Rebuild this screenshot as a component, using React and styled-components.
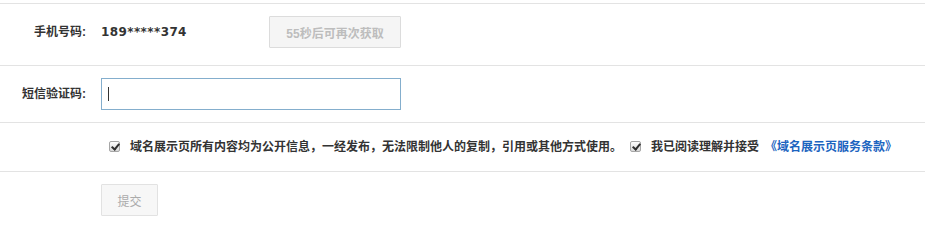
import React from 'react'
import styled, { createGlobalStyle } from 'styled-components'

const GlobalStyle = createGlobalStyle`
    html, body {
        margin: 0;
        padding: 0;
        background: #fff;
    }
    body {
        font-family: "Liberation Sans", "Noto Sans CJK SC", sans-serif;
        font-size: 12px;
        color: #333;
    }
`

export default class App extends React.Component {
    constructor(props) {
        super(props)
        this.state = {
            code: '',
            agreePublic: true,
            agreeTerms: true,
        }
    }

    render() {
        return (
            <Form>
                <GlobalStyle />
                <Row $top={12} $bottom={17}>
                    <Label>手机号码:</Label>
                    <Phone>189*****374</Phone>
                    <Button disabled>55秒后可再次获取</Button>
                </Row>
                <Row $top={12} $bottom={12}>
                    <Label>短信验证码:</Label>
                    <InputWrap>
                        <Input
                            value={this.state.code}
                            onChange={e => this.setState({ code: e.target.value })}
                        />
                        {this.state.code === '' && <Caret />}
                    </InputWrap>
                </Row>
                <Row $top={16} $bottom={16}>
                    <Label />
                    <Agreements>
                        <Check
                            type="checkbox"
                            checked={this.state.agreePublic}
                            onChange={e => this.toggle('agreePublic')}
                        />
                        <AgreeText>域名展示页所有内容均为公开信息，一经发布，无法限制他人的复制，引用或其他方式使用。</AgreeText>
                        <Check
                            type="checkbox"
                            $gap={8}
                            checked={this.state.agreeTerms}
                            onChange={e => this.toggle('agreeTerms')}
                        />
                        <AgreeText>我已阅读理解并接受</AgreeText>
                        <TermsLink href="#">《域名展示页服务条款》</TermsLink>
                    </Agreements>
                </Row>
                <Row $top={12} $bottom={10}>
                    <Label />
                    <Button disabled $small>提交</Button>
                </Row>
            </Form>
        )
    }

    toggle = (key) => {
        this.setState({
            [key]: !this.state[key],
        })
    }
}

const Form = styled.div`
            padding-top: 3px;
            width: 925px;
        `

const Row = styled.div`
            display: flex;
            align-items: center;
            border-top: 1px solid #e3e3e3;
            padding: ${p => p.$top}px 0 ${p => p.$bottom}px;
        `

const Label = styled.div`
            width: 86px;
            flex: none;
            margin-right: 15px;
            text-align: right;
            font-weight: bold;
            color: #333;
            line-height: 16px;
            font-family: "Liberation Sans", "Noto Sans CJK SC", sans-serif;
        `

const Phone = styled.div`
            width: 168px;
            flex: none;
            margin-top: -1px;
            font-family: "DejaVu Sans", sans-serif;
            font-weight: bold;
            font-size: 12px;
            letter-spacing: 0.4px;
            color: #333;
        `

const Button = styled.button`
            height: 32px;
            box-sizing: border-box;
            padding: 0;
            width: ${p => p.$small ? '57px' : '132px'};
            background: ${p => p.$small ? '#f7f7f7' : '#f5f5f5'};
            border: 1px solid ${p => p.$small ? '#e2e2e2' : '#dcdcdc'};
            border-radius: 1px;
            color: ${p => p.$small ? '#ababab' : '#bdbdbd'};
            font-family: "Liberation Sans", "Noto Sans CJK SC", sans-serif;
            font-size: 12px;
            font-weight: ${p => p.$small ? 'normal' : 'bold'};
            white-space: nowrap;
            cursor: not-allowed;
        `

const InputWrap = styled.div`
            position: relative;
            width: 300px;
            height: 32px;
        `

const Input = styled.input`
            box-sizing: border-box;
            width: 100%;
            height: 100%;
            border: 1px solid #84aecd;
            border-radius: 0;
            outline: none;
            padding: 0 7px;
            font-size: 12px;
            font-family: "Liberation Sans", "Noto Sans CJK SC", sans-serif;
            background: #fff;
        `

const Caret = styled.span`
            position: absolute;
            left: 7px;
            top: 9px;
            width: 1px;
            height: 14px;
            background: #333;
        `

const Agreements = styled.div`
            display: flex;
            align-items: center;
            line-height: 16px;
        `

const Check = styled.input`
            appearance: none;
            -webkit-appearance: none;
            position: relative;
            box-sizing: border-box;
            width: 11px;
            height: 11px;
            margin: -2px 10px 0 ${p => p.$gap != null ? p.$gap : 8}px;
            border: 1px solid #a6a6a6;
            border-radius: 2px;
            background: linear-gradient(#fdfdfd, #d9d9d9);
            flex: none;
            cursor: pointer;

            &:checked::after {
                content: '';
                position: absolute;
                left: 3px;
                top: 0px;
                width: 3px;
                height: 6px;
                border: solid #2e2e2e;
                border-width: 0 2px 2px 0;
                transform: rotate(40deg);
            }
        `

const AgreeText = styled.span`
            font-weight: bold;
            color: #333;
            white-space: nowrap;
        `

const TermsLink = styled.a`
            margin-left: 6px;
            font-weight: bold;
            color: #1c64c0;
            text-decoration: none;
            white-space: nowrap;
        `
